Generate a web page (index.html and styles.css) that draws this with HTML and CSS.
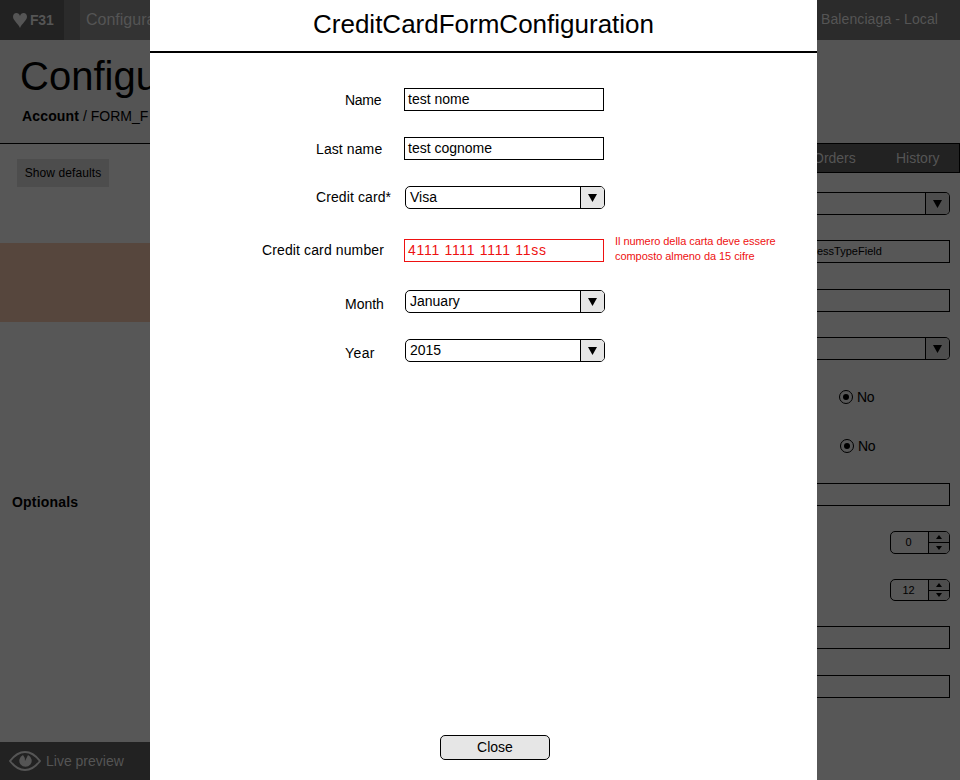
FILE: index.html
```html
<!DOCTYPE html>
<html lang="en">
<head>
<meta charset="utf-8">
<title>CreditCardFormConfiguration</title>
<link rel="stylesheet" href="styles.css">
</head>
<body>
<div class="page">
  <header class="topbar">
    <div class="brand"><svg width="14" height="15" viewBox="0 0 14 15"><path d="M7 15C5.500 11 0 7.500 0 3.800C0 1.500 1.400 0 3.400 0C5.200 0 6.500 1.200 7 3C7.500 1.200 8.800 0 10.600 0C12.600 0 14 1.500 14 3.800C14 7.500 8.500 11 7 15Z" fill="currentColor"/></svg><b>F31</b></div>
    <div class="crumb">Configura</div>
    <div class="site">Balenciaga - Local</div>
  </header>
  <section class="heading">
    <h1>Configu</h1>
    <p><b>Account</b> / FORM_F</p>
  </section>
  <main class="columns">
    <aside class="side">
      <button class="defaults">Show defaults</button>
      <div class="highlight"></div>
      <div class="optionals">Optionals</div>
    </aside>
    <section class="panel">
      <nav class="tabs"><span class="orders">Orders</span><span class="history">History</span></nav>
      <div class="fields">
        <div class="select"><span></span><i><svg width="9" height="8"><path d="M0 0H9L4.500 8Z"/></svg></i></div>
        <div class="input small">essTypeField</div>
        <div class="input"></div>
        <div class="select"><span></span><i><svg width="9" height="8"><path d="M0 0H9L4.500 8Z"/></svg></i></div>
        <div class="radio"><i></i>No</div>
        <div class="radio second"><i></i>No</div>
        <div class="input after-radio"></div>
        <div class="spinner"><span>0</span><div><i><svg width="6" height="4"><path d="M0 4H6L3 0Z"/></svg></i><i><svg width="6" height="4"><path d="M0 0H6L3 4Z"/></svg></i></div></div>
        <div class="spinner"><span>12</span><div><i><svg width="6" height="4"><path d="M0 4H6L3 0Z"/></svg></i><i><svg width="6" height="4"><path d="M0 0H6L3 4Z"/></svg></i></div></div>
        <div class="input"></div>
        <div class="input last"></div>
      </div>
    </section>
  </main>
  <footer class="preview">
    <svg width="32" height="20" viewBox="0 0 32 20"><path d="M1 10Q8 1 16 1T31 10Q24 19 16 19T1 10Z" fill="none" stroke="currentColor" stroke-width="2"/><path d="M14 4Q16 6 16 10L19 4A6.200 6.200 0 1 1 14 4Z" fill="currentColor"/></svg>
    <span>Live preview</span>
  </footer>
</div>
<div class="modal">
  <h2><span>CreditCardFormConfiguration</span></h2>
  <form class="form">
    <div class="row name"><label>Name</label><div class="input">test nome</div></div>
    <div class="row lastname"><label>Last name</label><div class="input">test cognome</div></div>
    <div class="row card"><label>Credit card*</label><div class="select"><span>Visa</span><i><svg width="9" height="8"><path d="M0 0H9L4.500 8Z"/></svg></i></div></div>
    <div class="row number"><label>Credit card number</label><div class="input error">4111 1111 1111 11ss</div><p>Il numero della carta deve essere<br>composto almeno da 15 cifre</p></div>
    <div class="row month"><label>Month</label><div class="select"><span>January</span><i><svg width="9" height="8"><path d="M0 0H9L4.500 8Z"/></svg></i></div></div>
    <div class="row year"><label>Year</label><div class="select"><span>2015</span><i><svg width="9" height="8"><path d="M0 0H9L4.500 8Z"/></svg></i></div></div>
  </form>
  <button class="close">Close</button>
</div>
</body>
</html>
```
FILE: styles.css
```css
* { box-sizing: border-box; }
body { margin: 0; width: 960px; height: 780px; overflow: hidden; position: relative; font: 14px/20px "Liberation Sans", sans-serif; color: #000; background: #555; }
h1, h2, p { margin: 0; font-weight: normal; }
svg { display: block; }
button { font-family: inherit; color: inherit; padding: 0; }
.page { display: flex; flex-direction: column; height: 780px; background: #575757; }
.topbar { display: flex; height: 40px; background: #2b2b2b; color: #555; line-height: 40px; }
.brand { width: 64px; padding-left: 13px; display: flex; align-items: center; gap: 3px; background: #222; }
.brand b { letter-spacing: -.2px; }
.crumb { margin-left: 16px; padding-left: 6px; flex: 1; background: #333; font-size: 16px; }
.site { width: 143px; padding-left: 4px; line-height: 39px; letter-spacing: .1px; }
.heading { height: 104px; border-bottom: 1px solid #000; background: #545454; }
.heading h1 { padding: 12px 0 0 20px; font-size: 40px; line-height: 48px; }
.heading p { padding: 6px 0 0 22px; white-space: pre; }
.heading b { letter-spacing: .15px; }
.columns { display: flex; flex: 1; justify-content: space-between; }
.side { width: 150px; }
.defaults { display: block; margin: 15px 0 0 17px; width: 92px; height: 28px; border: 0; background: #4d4d4d; font-size: 12px; letter-spacing: .1px; }
.highlight { height: 79px; margin-top: 56px; background: #56463d; }
.optionals { margin-top: 164px; padding: 6px 12px; font-weight: bold; letter-spacing: .2px; }
.panel { width: 143px; }
.tabs { height: 30px; margin-top: -1px; border: 1px solid #000; border-left: 0; background: #222; color: #555; line-height: 29px; display: flex; }
.orders { margin-left: -4px; width: 83px; }
.fields { padding: 19px 10px 0 0; display: flex; flex-direction: column; }
.input { width: 200px; height: 23px; padding-left: 3px; border: 1px solid #000; line-height: 21px; }
.select { width: 200px; height: 23px; border: 1px solid #000; border-radius: 5px; display: flex; overflow: hidden; line-height: 21px; }
.select span { flex: 1; padding-left: 4px; }
.select i { width: 24px; border-left: 1px solid #000; background: #e6e6e6; display: flex; align-items: center; justify-content: center; }
.fields .input, .fields .select { width: 133px; border-left: 0; margin-bottom: 26px; }
.fields .select { border-radius: 0 5px 5px 0; margin-bottom: 25px; }
.fields .select i, .spinner i { background: #4d4d4d; }
.fields .small { padding-left: 0; font-size: 11px; margin-bottom: 26px; }
.fields .small + .input { margin-bottom: 25px; }
.radio { display: flex; align-items: center; gap: 4px; height: 20px; margin: 2px 0 29px 22px; letter-spacing: -.4px; }
.radio i { width: 14px; height: 14px; border: 1px solid #000; border-radius: 50%; padding: 3px; }
.radio i::before { content: ""; display: block; width: 6px; height: 6px; border-radius: 50%; background: #000; }
.radio.second { margin: 0 0 27px 23px; }
.fields .after-radio { margin-bottom: 25px; }
.spinner { align-self: flex-end; width: 60px; height: 23px; border: 1px solid #000; border-radius: 5px; display: flex; overflow: hidden; margin-bottom: 25px; font-size: 11px; line-height: 20px; }
.spinner span { flex: 1; text-align: center; padding-right: 2px; }
.spinner div { width: 21px; border-left: 1px solid #000; display: flex; flex-direction: column; }
.spinner i { flex: 1; display: flex; align-items: center; justify-content: center; }
.spinner i + i { border-top: 1px solid #000; }
.spinner + .spinner { height: 22px; margin-bottom: 25px; }
.preview { width: 150px; height: 38px; display: flex; gap: 5px; align-items: center; padding-left: 9px; background: #222; color: #555; }
.modal { position: absolute; left: 150px; top: 0; width: 667px; height: 780px; background: #fff; display: flex; flex-direction: column; }
.modal h2 { height: 53px; border-bottom: 2px solid #000; padding: 9px 0 0 163px; font-size: 26px; line-height: 30px; }
.form { flex: 1; padding-top: 35px; }
.row { display: flex; height: 23px; margin-bottom: 26px; white-space: nowrap; }
.row label { width: 254px; line-height: 24px; padding-left: 195px; }
.row .select { margin-left: 1px; }
.name label { letter-spacing: -.3px; }
.lastname label, .card label { padding-left: 166px; letter-spacing: .1px; }
.card { margin-bottom: 30px; }
.card label, .number label { line-height: 22px; }
.number { margin-bottom: 28px; }
.number label { padding-left: 112px; letter-spacing: .12px; }
.month label, .year label { line-height: 28px; }
.year label { letter-spacing: .4px; }
.input.error { color: #e11; border-color: #e11; letter-spacing: .7px; }
.number p { margin: -5px 0 0 11px; color: #e11; font-size: 11px; line-height: 15px; letter-spacing: -.06px; }
.close { margin: 0 0 20px 290px; width: 110px; height: 25px; padding-bottom: 1px; border: 1px solid #000; border-radius: 5px; background: #e6e6e6; font-size: 14px; }
```
